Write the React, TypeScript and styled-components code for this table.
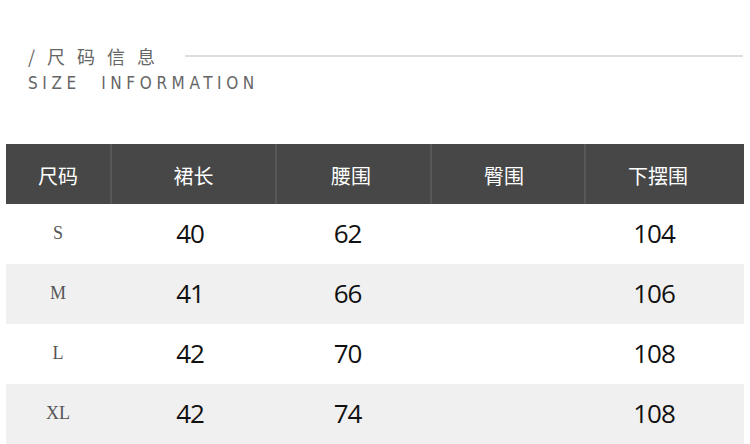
import styled, { createGlobalStyle } from 'styled-components';

const GlobalStyle = createGlobalStyle`
  html, body {
    margin: 0;
    padding: 0;
    background: #fff;
  }
  body {
    font-family: "Noto Sans", "Noto Sans CJK SC", sans-serif;
  }
`;

const Page = styled.div`
  width: 750px;
  height: 444px;
  overflow: hidden;
  background: #fff;
`;

const Heading = styled.div`
  padding: 44px 7px 0 28px;
`;

const TitleRow = styled.div`
  display: flex;
  align-items: center;
  height: 24px;
`;

const Title = styled.h2`
  margin: 0;
  font-family: "Noto Sans CJK SC", sans-serif;
  font-weight: 400;
  font-size: 18px;
  line-height: 24px;
  letter-spacing: 12px;
  color: #666;
  white-space: nowrap;
`;

const Rule = styled.div`
  flex: 1;
  height: 2px;
  margin-left: 18px;
  background: #dedede;
`;

const Subtitle = styled.div`
  margin-top: 6px;
  font-family: "DejaVu Sans", sans-serif;
  font-stretch: condensed;
  font-weight: 400;
  font-size: 17px;
  line-height: 18px;
  letter-spacing: 4.6px;
  word-spacing: 11px;
  color: #666;
`;

const Table = styled.div`
  margin: 52px 6px 0 6px;
`;

const Row = styled.div<{ $head?: boolean; $shade?: boolean }>`
  display: grid;
  grid-template-columns: 104px 165px 155px 154px 160px;
  height: 60px;
  background: ${(p) => (p.$head ? '#474747' : p.$shade ? '#f0f0f0' : '#fff')};
`;

const HeadCell = styled.div<{ $first?: boolean; $nudge?: number }>`
  display: flex;
  align-items: center;
  justify-content: center;
  padding: 3px ${(p) => p.$nudge ?? 0}px 0 0;
  border-left: ${(p) => (p.$first ? 'none' : '2px solid #575757')};
  color: #fff;
  font-family: "Noto Sans CJK SC", sans-serif;
  font-size: 20px;
`;

const ValueCell = styled.div<{ $nudge?: number }>`
  display: flex;
  align-items: center;
  justify-content: center;
  padding: 0 ${(p) => p.$nudge ?? 0}px 3px 0;
  color: #111;
  font-family: "Open Sans", "Noto Sans", sans-serif;
  font-size: 26px;
  letter-spacing: -1px;
`;

const SizeCell = styled.div`
  display: flex;
  align-items: center;
  justify-content: center;
  padding-bottom: 2px;
  font-family: "Liberation Serif", "Times New Roman", serif;
  font-size: 18px;
  color: #555;
`;

const headNudges = [0, 0, 5, 8, 14];
const valueNudges = [5, 10, 8, 20];
const heads = ['尺码', '裙长', '腰围', '臀围', '下摆围'];

const rows = [
  { size: 'S', values: ['40', '62', '', '104'] },
  { size: 'M', values: ['41', '66', '', '106'] },
  { size: 'L', values: ['42', '70', '', '108'] },
  { size: 'XL', values: ['42', '74', '', '108'] },
];

function App() {
  return (
    <Page>
      <GlobalStyle />
      <Heading>
        <TitleRow>
          <Title>/尺码信息</Title>
          <Rule />
        </TitleRow>
        <Subtitle>SIZE INFORMATION</Subtitle>
      </Heading>
      <Table>
        <Row $head>
          {heads.map((h, i) => (
            <HeadCell key={h} $first={i === 0} $nudge={headNudges[i]}>
              {h}
            </HeadCell>
          ))}
        </Row>
        {rows.map((r, idx) => (
          <Row key={r.size} $shade={idx % 2 === 1}>
            <SizeCell>{r.size}</SizeCell>
            {r.values.map((v, i) => (
              <ValueCell key={i} $nudge={valueNudges[i]}>
                {v}
              </ValueCell>
            ))}
          </Row>
        ))}
      </Table>
    </Page>
  );
}

export default App;
